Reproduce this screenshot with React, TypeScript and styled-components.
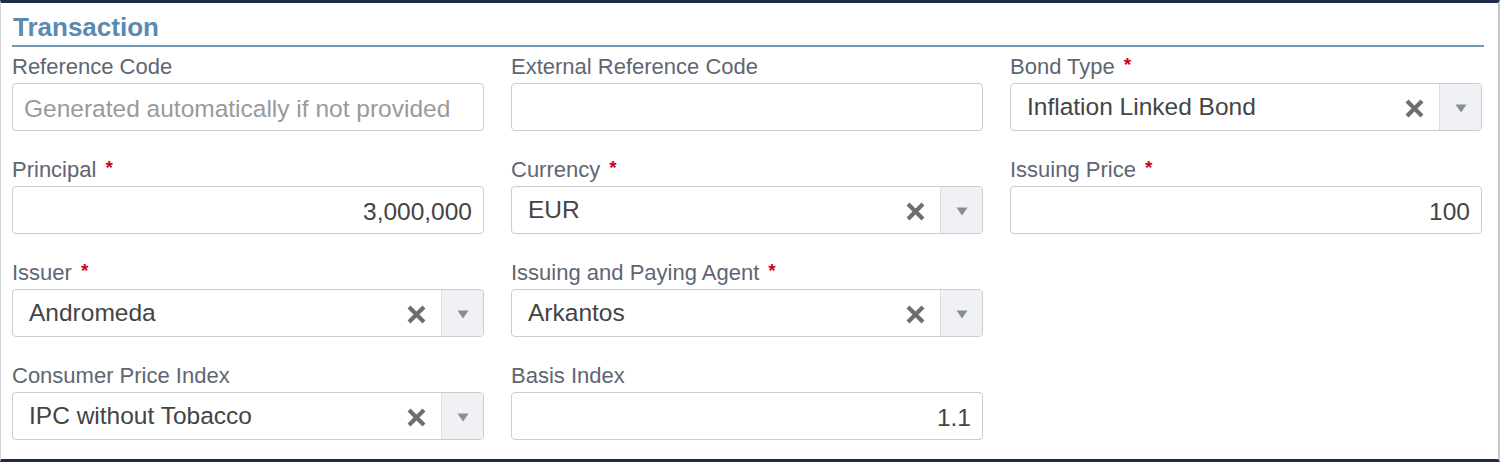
import styled, { createGlobalStyle } from "styled-components";

const GlobalStyle = createGlobalStyle`
  html, body {
    margin: 0;
    padding: 0;
    background: #ffffff;
  }
  body {
    font-family: "Liberation Sans", Arial, sans-serif;
  }
`;

const colours = {
  label: "#5e6673",
  text: "#444444",
  placeholder: "#9a9a9a",
  border: "#cccccc",
  title: "#5a8ab0",
  rule: "#6d9bbd",
  required: "#d0021b",
  handle: "#eff1f5",
};

const Panel = styled.section`
  box-sizing: border-box;
  width: 1500px;
  height: 462px;
  border-top: 3px solid #1e2b4d;
  border-bottom: 3px solid #1e2b4d;
  border-left: 1px solid #d4d6dc;
  border-right: 2px solid #c6c7cc;
  padding: 9px 14px 0 11px;
  background: #ffffff;
`;

const Title = styled.h2`
  margin: 0;
  padding: 0 0 3px 1px;
  font-size: 26px;
  line-height: 30px;
  font-weight: 700;
  color: ${colours.title};
  border-bottom: 2px solid ${colours.rule};
`;

const FieldGrid = styled.div`
  display: grid;
  grid-template-columns: repeat(3, 472px);
  column-gap: 27px;
  row-gap: 26px;
  margin-top: 7px;
`;

const Field = styled.div`
  display: flex;
  flex-direction: column;
  gap: 3px;
`;

const Label = styled.label`
  font-size: 22px;
  line-height: 26px;
  color: ${colours.label};
  white-space: nowrap;
`;

const Star = styled.span`
  display: inline-block;
  color: ${colours.required};
  margin-left: 9px;
  font-size: 19px;
  font-weight: 700;
  vertical-align: top;
  line-height: 22px;
`;

const TextInput = styled.input<{ $align?: "left" | "right" }>`
  box-sizing: border-box;
  width: 100%;
  height: 48px;
  margin: 0;
  padding: 4px 11px 0;
  border: 1px solid ${colours.border};
  border-radius: 4px;
  font-family: "Liberation Sans", Arial, sans-serif;
  font-size: 24.5px;
  color: ${colours.text};
  text-align: ${(p) => p.$align ?? "left"};
  background: #ffffff;
  outline: none;

  &::placeholder {
    color: ${colours.placeholder};
    opacity: 1;
  }
`;

const SelectBox = styled.div`
  box-sizing: border-box;
  display: flex;
  align-items: stretch;
  width: 100%;
  height: 48px;
  border: 1px solid ${colours.border};
  border-radius: 4px;
  overflow: hidden;
  background: #ffffff;
`;

const SelectValue = styled.span`
  flex: 1;
  display: flex;
  align-items: center;
  padding-left: 16px;
  font-size: 24.5px;
  color: ${colours.text};
  white-space: nowrap;
`;

const ClearButton = styled.span`
  display: flex;
  align-items: center;
  justify-content: center;
  width: 50px;
  padding-top: 2px;
  color: #6e6e6e;
`;

const Handle = styled.span`
  display: flex;
  align-items: center;
  justify-content: center;
  width: 41px;
  padding-top: 2px;
  border-left: 1px solid #dcdfe4;
  background: ${colours.handle};
`;

const ClearIcon = () => (
  <svg width="19" height="19" viewBox="0 0 19 19">
    <path
      d="M3.5 3.5 L15.5 15.5 M15.5 3.5 L3.5 15.5"
      stroke="currentColor"
      strokeWidth="4.2"
      strokeLinecap="square"
      fill="none"
    />
  </svg>
);

const ArrowIcon = () => (
  <svg width="12" height="9" viewBox="0 0 12 9">
    <path d="M0.5 0.5 L11.5 0.5 L6 8.5 Z" fill="#8a8d92" />
  </svg>
);

type FieldDef =
  | { kind: "input"; label: string; required?: boolean; value?: string; placeholder?: string; align?: "left" | "right" }
  | { kind: "select"; label: string; required?: boolean; value: string }
  | { kind: "empty" };

const fields: FieldDef[] = [
  { kind: "input", label: "Reference Code", placeholder: "Generated automatically if not provided" },
  { kind: "input", label: "External Reference Code" },
  { kind: "select", label: "Bond Type", required: true, value: "Inflation Linked Bond" },
  { kind: "input", label: "Principal", required: true, value: "3,000,000", align: "right" },
  { kind: "select", label: "Currency", required: true, value: "EUR" },
  { kind: "input", label: "Issuing Price", required: true, value: "100", align: "right" },
  { kind: "select", label: "Issuer", required: true, value: "Andromeda" },
  { kind: "select", label: "Issuing and Paying Agent", required: true, value: "Arkantos" },
  { kind: "empty" },
  { kind: "select", label: "Consumer Price Index", value: "IPC without Tobacco" },
  { kind: "input", label: "Basis Index", value: "1.1", align: "right" },
  { kind: "empty" },
];

const App = () => {
  return (
    <>
      <GlobalStyle />
      <Panel>
        <Title>Transaction</Title>
        <FieldGrid>
          {fields.map((f, i) => {
            if (f.kind === "empty") return <div key={i} />;
            return (
              <Field key={i}>
                <Label>
                  {f.label}
                  {f.required && <Star>*</Star>}
                </Label>
                {f.kind === "input" ? (
                  <TextInput
                    readOnly
                    $align={f.align}
                    defaultValue={f.value ?? ""}
                    placeholder={f.placeholder}
                  />
                ) : (
                  <SelectBox>
                    <SelectValue>{f.value}</SelectValue>
                    <ClearButton>
                      <ClearIcon />
                    </ClearButton>
                    <Handle>
                      <ArrowIcon />
                    </Handle>
                  </SelectBox>
                )}
              </Field>
            );
          })}
        </FieldGrid>
      </Panel>
    </>
  );
};

export default App;
